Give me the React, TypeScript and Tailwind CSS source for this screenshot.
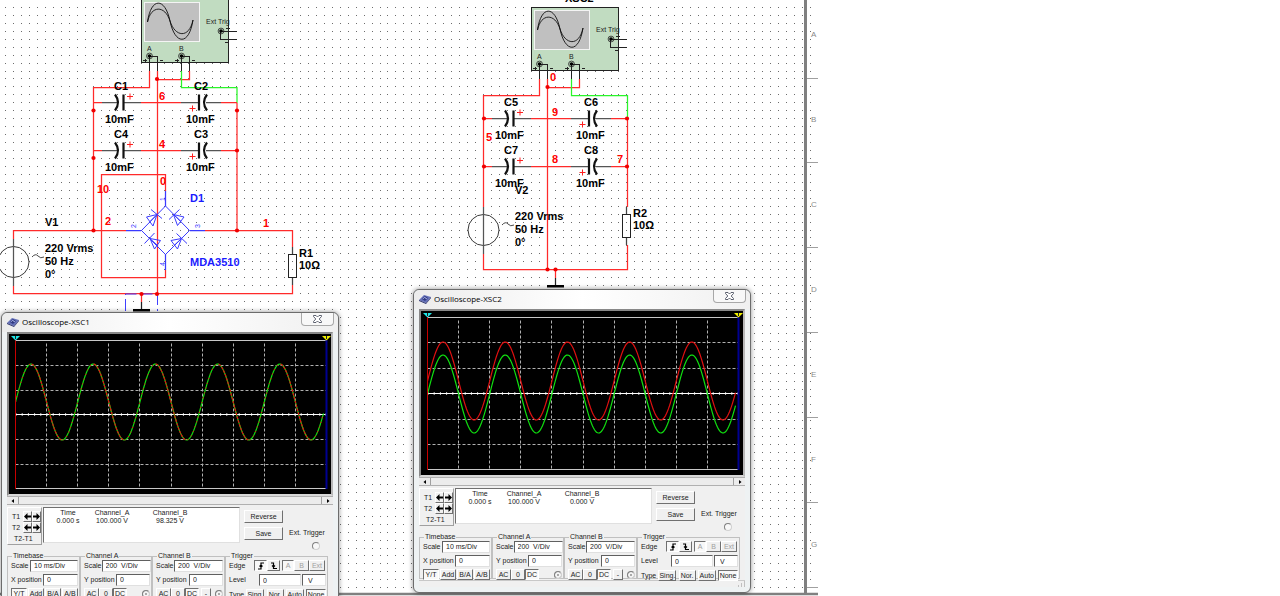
import type { ReactNode } from "react";

type Trace = {
  color: string;
  center: number;
  amp: number;
  dash?: string;
  half?: "rising" | "falling";
};

type ScopeProps = {
  name: string;
  position: string;
  plotHeight: number;
  traces: Trace[];
  channelB: string;
};

const PLOT_LEFT = 6.5;
const PLOT_WIDTH = 311;

const gridDots = () => {
  let d = "";
  for (let i = 0; i < 102; i++) {
    for (let j = 0; j < 74; j++) {
      d += `M${Math.floor(5.67 + i * 7.965)} ${Math.floor(7.4 + j * 7.95) + 0.5}h1`;
    }
  }
  return d;
};

const sinePath = ({ center, amp, half }: Trace) => {
  let d = "";
  let pen = false;
  for (let x = 0; x <= 308; x++) {
    const angle = (x / (PLOT_WIDTH / 5)) * Math.PI * 2;
    const rising = Math.cos(angle) > 0;
    if ((half === "falling" && rising) || (half === "rising" && !rising)) {
      pen = false;
      continue;
    }
    const y = center - amp * Math.sin(angle);
    d += `${pen ? "L" : "M"}${PLOT_LEFT + x} ${y.toFixed(2)}`;
    pen = true;
  }
  return d;
};

const Wire = ({ d, color = "#ff2a2a" }: { d: string; color?: string }) => (
  <path d={d} stroke={color} strokeWidth="1.25" fill="none" />
);

const Label = ({
  x,
  y,
  color = "#000",
  children,
}: {
  x: number;
  y: number;
  color?: string;
  children: ReactNode;
}) => (
  <text x={x} y={y} fill={color} className="text-[11px] font-bold">
    {children}
  </text>
);

const Dots = ({ at }: { at: number[][] }) => (
  <g fill="#f00000">
    {at.map(([x, y]) => (
      <circle key={`${x}-${y}`} cx={x} cy={y} r="2.1" />
    ))}
  </g>
);

const Terminal = ({ x, y }: { x: number; y: number }) => (
  <>
    <circle cx={x} cy={y} r="2.9" fill="none" stroke="#222" strokeWidth="0.8" />
    <circle cx={x} cy={y} r="1.8" fill="#000" />
  </>
);

// XSC instrument symbol
const Instrument = ({ x, y }: { x: number; y: number }) => (
  <g transform={`translate(${x} ${y})`}>
    <rect x="0.5" y="0.5" width="87" height="63" fill="#c1dcc1" stroke="#222" shapeRendering="crispEdges" />
    <rect x="3.5" y="3.5" width="55" height="39" fill="#c0c0c0" stroke="#f4f4f4" shapeRendering="crispEdges" />
    <g fill="none" stroke="#111" strokeWidth="0.9">
      <path d="M6.5 23C10 -2 24 -2 29 22S48 47 52 21" />
      <path d="M6.5 23C10 6 24 6 29 22S48 40 52 21" />
    </g>
    <g fill="none" stroke="#222" shapeRendering="crispEdges">
      <path d="M80 32.5H96M79.5 32V40.5H96M84 43.5H88M85 29.5H89M87.5 28V32" />
      <path d="M8.5 57V72M8 57.5H16.5V72M40.5 57V72M40 57.5H48.5V72" />
      <path d="M2 61.5H6M4.5 60V64M19 61.5H22M34 61.5H38M36.5 60V64M51 61.5H54" />
    </g>
    <Terminal x={80} y={32} />
    <Terminal x={8.5} y={57} />
    <Terminal x={40.5} y={57} />
    <g fill="#222" className="text-[7px]">
      <text x="65" y="25">Ext Trig</text>
      <text x="6" y="52">A</text>
      <text x="38" y="52">B</text>
    </g>
  </g>
);

// Two capacitors in series between the left and right rails
const CapRow = ({ x, y, names }: { x: number; y: number; names: [string, string] }) => (
  <g transform={`translate(${x} ${y})`}>
    <Wire d="M0 .5H9M48 .5H88M128 .5H144" />
    <Wire d="M9 .5H25M31 .5H48M88 .5H105M113 .5H128" color="#555" />
    <g fill="none" stroke="#111" strokeWidth="2.2">
      <path d="M22 -7.5Q28 .5 22 8.5" />
      <path d="M30.5 -7.5V8.5M106 -7.5V8.5" />
      <path d="M114 -7.5Q108 .5 114 8.5" />
    </g>
    <path d="M34 -5.5H40M37 -8.5V-2.5M96.500 6.5H102.500M99.500 3.500V9.500" stroke="#ff2020" />
    <Label x={21} y={-12}>{names[0]}</Label>
    <Label x={101} y={-12}>{names[1]}</Label>
    <Label x={12} y={21}>10mF</Label>
    <Label x={93} y={21}>10mF</Label>
  </g>
);

const Source = ({ x, y }: { x: number; y: number }) => (
  <g transform={`translate(${x} ${y})`}>
    <circle cx=".5" cy="0" r="15.500" fill="none" stroke="#222" strokeWidth="0.9" />
    <Wire d="M.5 -23V24" color="#555" />
    <path d="M19 -5Q22.500 -9 25 -6T31 -5" fill="none" stroke="#333" strokeWidth="0.9" />
    <Label x={32} y={-10}>220 Vrms</Label>
    <Label x={32} y={3}>50 Hz</Label>
    <Label x={32} y={16}>0°</Label>
  </g>
);

const Resistor = ({ x, y, name }: { x: number; y: number; name: string }) => (
  <g transform={`translate(${x} ${y})`}>
    <Wire d="M.5 -7V0M.5 24V31" color="#444" />
    <rect x="-3.5" y=".5" width="8" height="23" fill="none" stroke="#222" shapeRendering="crispEdges" />
    <Label x={7} y={3}>{name}</Label>
    <Label x={7} y={15}>10Ω</Label>
  </g>
);

const Ground = ({ x, y }: { x: number; y: number }) => (
  <g transform={`translate(${x} ${y})`}>
    <Wire d="M.5 0V8" />
    <Wire d="M.5 8V15" color="#222" />
    <rect x="-8" y="15" width="17" height="2.500" fill="#000" />
  </g>
);

const Bridge = () => (
  <g>
    <Wire d="M165.500 191V206M165.500 254V270M126 230.500H141M190 230.500H205" color="#3a3aff" />
    <g fill="none" stroke="#3a3aff" strokeWidth="1">
      <path d="M165.500 206L189.500 230.500L165.500 254.500L141.500 230.500Z" />
      <path d="M157 214.500L146.500 217L153 226ZM151 209.500L162 218.500M157 214.500L150 221.500" />
      <path d="M173.500 214.500L184 217L177.500 225.500ZM179.500 209.500L169 219.500M173.500 214.500L181 221.500" />
      <path d="M150 238.500L160.500 240.500L154.500 249ZM154.500 233L144.500 243.500M150 238.500L157.500 245.500" />
      <path d="M181.500 238.500L171 240.500L177.500 249ZM176.500 233.500L187 243.500M181.500 238.500L174 245.500" />
    </g>
    <g fill="#3a3aff" className="text-[7px]">
      <text transform="translate(165 201) rotate(-90)">1</text>
      <text transform="translate(136 228) rotate(-90)">2</text>
      <text transform="translate(200 228) rotate(-90)">3</text>
      <text transform="translate(165 266) rotate(-90)">4</text>
    </g>
    <Label x={190} y={202} color="#1a1aff">D1</Label>
    <Label x={190} y={266} color="#1a1aff">MDA3510</Label>
  </g>
);

const Schematic = () => (
  <svg
    role="img"
    aria-label="Schematic"
    className="block h-full w-full font-['Liberation_Sans',Arial,sans-serif]"
  >
    <path d={gridDots()} stroke="#6c6c6c" shapeRendering="crispEdges" />

    {/* sheet border and ruler */}
    <path d="M805.500 0V595" stroke="#808080" strokeWidth="3" />
    <path d="M0 594H818" stroke="#808080" strokeWidth="2.500" />
    <path
      d="M807 78.500H818M807 162.500H818M807 247.500H818M807 332.500H818M807 417.500H818M807 502.500H818M807 587.500H818"
      stroke="#a0a0a0"
    />
    <g fill="#8a8a8a" className="text-[8px]">
      {["A", "B", "C", "D", "E", "F", "G"].map((letter, i) => (
        <text key={letter} x="811" y={37 + i * 85}>{letter}</text>
      ))}
    </g>

    {/* left circuit */}
    <Instrument x={141} y={-1} />
    <Wire d="M149.500 71V87.500H93.500V230M157.500 71V293M189.500 71V79.500H157" />
    <Wire d="M181.500 71V87.500H237V103" color="#2af52a" />
    <Wire d="M237 103V230" />
    <CapRow x={93} y={102} names={["C1", "C2"]} />
    <CapRow x={93} y={150} names={["C4", "C3"]} />
    <Wire d="M126 230.500H13.500V239M13.500 286V293.500H292.500V285M292.500 247V230.500H205" />
    <Wire d="M165.500 191V174.500H101.500V277.500H165.500V270" />
    <Bridge />
    <Source x={13} y={262} />
    <Resistor x={292} y={254} name="R1" />
    <Ground x={141} y={294} />
    <path d="M125.500 311V294H157.500V311" fill="none" stroke="#4040ff" strokeDasharray="12 4" />
    <Dots at={[[157, 79], [93.5, 110.5], [237, 110.5], [93.5, 158], [237, 150.5], [93.5, 230.5], [237, 230.5], [141.5, 294], [157, 294]]} />
    <Label x={159} y={100} color="#f00">6</Label>
    <Label x={159} y={148} color="#f00">4</Label>
    <Label x={160} y={185} color="#f00">0</Label>
    <Label x={97} y={193} color="#f00">10</Label>
    <Label x={105} y={225} color="#f00">2</Label>
    <Label x={263} y={227} color="#f00">1</Label>
    <Label x={45} y={226}>V1</Label>

    {/* right circuit */}
    <Label x={565} y={2}>XSC2</Label>
    <Instrument x={531} y={7} />
    <Wire d="M539.500 79V95.500H483.500V207M547.500 79V269M579.500 79V87.500H547" />
    <Wire d="M571.500 79V95.500H627.500V118" color="#2af52a" />
    <Wire d="M627.500 118V207M483.500 254V269.500H627.500V245" />
    <CapRow x={483} y={118} names={["C5", "C6"]} />
    <CapRow x={483} y={166} names={["C7", "C8"]} />
    <Source x={483} y={230} />
    <Resistor x={626} y={214} name="R2" />
    <Ground x={555} y={270} />
    <Dots at={[[547.5, 87], [484, 118.5], [627, 118.5], [484, 166.5], [627, 166.5], [547.5, 269.5], [555.5, 269.5]]} />
    <Label x={550} y={81} color="#f00">0</Label>
    <Label x={552} y={116} color="#f00">9</Label>
    <Label x={486} y={141} color="#f00">5</Label>
    <Label x={552} y={163} color="#f00">8</Label>
    <Label x={617} y={163} color="#f00">7</Label>
    <Label x={515} y={194}>V2</Label>
  </svg>
);

const Plot = ({ height, traces }: { height: number; traces: Trace[] }) => {
  const top = 6.5;
  const bottom = height - 5;
  const step = (bottom - top) / 6;
  const middle = Math.floor(top + step * 3) + 0.5;
  const right = PLOT_LEFT + PLOT_WIDTH;
  return (
    <svg className="block w-full bg-black" height={height} role="img" aria-label="Waveforms">
      <g stroke="#b0b0b0" strokeDasharray="3 2">
        {[1, 2, 3, 4, 5, 6, 7, 8, 9].map((i) => {
          const x = Math.floor(PLOT_LEFT + i * 31.1) + 0.5;
          return <path key={i} d={`M${x} ${top + 3}V${bottom}`} />;
        })}
        {[1, 2, 4, 5].map((i) => {
          const y = Math.floor(top + i * step) + 0.5;
          return <path key={i} d={`M${PLOT_LEFT} ${y}H${right}`} />;
        })}
      </g>
      <path d={`M${PLOT_LEFT} ${top}H${right}M${PLOT_LEFT} ${bottom - 0.5}H${right}`} stroke="#c8c8c8" />
      <path d={`M${PLOT_LEFT} ${middle}H${right}`} stroke="#fff" />
      <path d={`M${PLOT_LEFT} ${middle}H${right}`} stroke="#fff" strokeWidth="2.500" strokeDasharray="1 5.200" />
      {traces.map((trace, i) => (
        <path
          key={i}
          d={sinePath(trace)}
          stroke={trace.color}
          strokeDasharray={trace.dash}
          strokeWidth="1.200"
          fill="none"
        />
      ))}
      <path d={`M${PLOT_LEFT} 6V${bottom}`} stroke="#c80000" />
      <path d={`M${right} 6V${bottom}`} stroke="#000090" strokeWidth="2" />
      <path d="M2 2H11L6.500 6.500Z" fill="#20e8e8" />
      <path d="M313 2H322L317.500 6.500Z" fill="#f0f000" />
      <path d="M6.500 2V5M317.500 2V5" stroke="#222" />
    </svg>
  );
};

const RAISED = "border border-t-white border-l-white border-r-[#707070] border-b-[#707070] bg-[#f0f0f0]";
const SUNKEN = "border border-t-[#707070] border-l-[#707070] border-r-white border-b-white bg-[#f8f8f8]";

const Push = ({
  children,
  className = "h-[11px] w-4",
  on = false,
  disabled = false,
  label,
}: {
  children: ReactNode;
  className?: string;
  on?: boolean;
  disabled?: boolean;
  label?: string;
}) => (
  <button
    type="button"
    disabled={disabled}
    aria-label={label}
    className={`flex shrink-0 items-center justify-center whitespace-nowrap disabled:text-[#a0a0a0] ${on ? SUNKEN : RAISED} ${className}`}
  >
    {children}
  </button>
);

const Field = ({
  id,
  label,
  value,
  width,
}: {
  id: string;
  label: string;
  value: string;
  width: string;
}) => (
  <div className="flex h-[11px] items-center justify-between">
    <label htmlFor={id} className="whitespace-nowrap">{label}</label>
    <input
      id={id}
      defaultValue={value}
      className={`h-3 shrink-0 border border-t-[#606060] border-l-[#606060] border-r-[#e0e0e0] border-b-[#e0e0e0] bg-white px-[3px] ${width}`}
    />
  </div>
);

const Group = ({
  title,
  className,
  children,
}: {
  title: string;
  className: string;
  children: ReactNode;
}) => (
  <fieldset className={`h-[46px] min-w-0 border border-[#c0c0c0] pr-px pl-[3px] ${className}`}>
    <legend className="ml-px h-2 px-px leading-[8px]">{title}</legend>
    <div className="flex flex-col gap-[3px]">{children}</div>
  </fieldset>
);

const Radio = ({ label, on = false }: { label: string; on?: boolean }) => (
  <input
    type="radio"
    aria-label={label}
    defaultChecked={on}
    className="size-2 shrink-0 appearance-none rounded-full border border-[#808080] border-r-[#d0d0d0] border-b-[#d0d0d0] bg-[#f8f8f8] checked:bg-[#909090] checked:shadow-[inset_0_0_0_2px_#f4f4f4]"
  />
);

const Arrow = ({ left = false, label }: { left?: boolean; label: string }) => (
  <Push className="h-[11px] w-[9px]" label={label}>
    <svg viewBox="0 0 7 7" className="size-[7px] shrink-0">
      <path
        d={left ? "M0 3.500L3.500 0V2.500H7V4.500H3.500V7Z" : "M7 3.500L3.500 0V2.500H0V4.500H3.500V7Z"}
        fill="#000"
      />
    </svg>
  </Push>
);

const EdgeIcon = ({ rising = false }: { rising?: boolean }) => (
  <svg viewBox="0 0 8 8" className="size-2">
    <path
      d={rising ? "M1 7H4V1H7M2.500 4.500L4 3L5.500 4.500" : "M1 1H3.500V6.500H7M2 3.500L3.500 5L5 3.500"}
      fill="none"
      stroke="#000"
      strokeWidth="1.200"
    />
  </svg>
);

const Channel = ({ id, name }: { id: string; name: string }) => (
  <Group title={`Channel ${name}`} className={name === "A" ? "w-[72px]" : "w-[73px]"}>
    <Field id={`${id}-${name}-scale`} label="Scale" value="200  V/Div" width="w-[49px]" />
    <Field id={`${id}-${name}-pos`} label="Y position" value="0" width="w-[34px]" />
    <div className="flex items-center">
      <Push className="h-[11px] w-[15px]">AC</Push>
      <Push className="h-[11px] w-[14px]">0</Push>
      <Push className="h-[11px] w-[14px]" on>DC</Push>
      {name === "B" && <Push className="ml-[2px] h-[11px] w-[10px]">-</Push>}
      <span className="ml-auto flex">
        <Radio label={`Channel ${name} input`} on />
      </span>
    </div>
  </Group>
);

const Oscilloscope = ({ name, position, plotHeight, traces, channelB }: ScopeProps) => (
  <section
    aria-label={name}
    className={`absolute w-[338px] rounded-md border border-[#6c6c6c] bg-[#eef2f3] px-[5px] pb-[5px] text-[7px] leading-[8px] text-[#222] shadow-[0_0_5px_#00000070] ${position}`}
  >
    <header className="-mx-[5px] flex h-[19px] items-start rounded-t-md bg-linear-to-r from-[#ececec] via-white to-[#f0f0f0] pr-1 pl-[5px]">
      <svg viewBox="0 0 12 10" className="mt-1 h-[10px] w-3">
        <path d="M0 6L5 1L12 3L7 9Z" fill="#6470b8" />
        <path d="M0 6L7 9L12 3V4L7 10L0 7Z" fill="#29306c" />
        <path d="M3 5L6 2L9 4L6 7Z" fill="#303a80" />
        <path d="M4 5L6 3L7 5L8 4" fill="none" stroke="#c8d0ff" strokeWidth="0.600" />
      </svg>
      <h2 className="mt-[2px] ml-[3px] font-['Open_Sans',sans-serif] text-[8px] leading-[14px] text-black">
        {name}
      </h2>
      <button
        type="button"
        aria-label="Close"
        className="ml-auto flex h-[13px] w-[33px] items-center justify-center rounded-b-sm border border-t-0 border-[#a8a8a8] bg-[#f8f8f8]"
      >
        <svg viewBox="0 0 9 8" className="h-2 w-[9px]">
          <path
            d="M.5 .5H3L4.500 2L6 .5H8.500V1.500L6.200 4L8.500 6.500V7.500H6L4.500 6L3 7.500H.5V6.500L2.800 4L.5 1.500Z"
            fill="#fff"
            stroke="#4c5060"
            strokeWidth="0.900"
          />
        </svg>
      </button>
    </header>

    <div className="bg-[#f0f0f0]">
      <div className="border-2 border-t-[#888] border-r-[#b8b8b8] border-b-[#d8d8d8] border-l-[#888]">
        <Plot height={plotHeight} traces={traces} />
      </div>
      <div className="flex h-[9px] border-y border-[#b0b0b0] bg-[#ececec]">
        <button type="button" aria-label="Scroll left" className="flex w-3 items-center justify-center border-r border-[#a0a0a0]">
          <svg viewBox="0 0 4 4" className="size-1"><path d="M3 0V4L.5 2Z" /></svg>
        </button>
        <button type="button" aria-label="Scroll right" className="ml-auto flex w-3 items-center justify-center border-l border-[#a0a0a0]">
          <svg viewBox="0 0 4 4" className="size-1"><path d="M1 0V4L3.500 2Z" /></svg>
        </button>
      </div>

      <div className="mt-[2px] flex h-[38px]">
        <div className="flex w-[35px] flex-col border border-t-white border-l-white border-r-[#a0a0a0] border-b-[#a0a0a0] pt-[3px] pl-1">
          <div className="flex items-center">
            <span className="w-3">T1</span>
            <Arrow left label="T1 left" />
            <Arrow label="T1 right" />
          </div>
          <div className="flex items-center">
            <span className="w-3">T2</span>
            <Arrow left label="T2 left" />
            <Arrow label="T2 right" />
          </div>
          <span className="mt-[2px] ml-[2px]">T2-T1</span>
        </div>
        <div className="ml-px h-9 w-[197px] border border-t-[#707070] border-l-[#707070] border-r-[#e0e0e0] border-b-[#e0e0e0] bg-white pt-px">
          <table className="table-fixed text-center whitespace-nowrap">
            <thead>
              <tr>
                <th className="w-12 p-0 font-normal">Time</th>
                <th className="w-10 p-0 font-normal">Channel_A</th>
                <th className="w-[76px] p-0 font-normal">Channel_B</th>
              </tr>
            </thead>
            <tbody>
              <tr>
                <td className="p-0">0.000 s</td>
                <td className="p-0">100.000 V</td>
                <td className="p-0">{channelB}</td>
              </tr>
            </tbody>
          </table>
        </div>
        <div className="ml-1 flex w-[39px] flex-col gap-1 pt-[3px]">
          <Push className="h-[13px] w-full">Reverse</Push>
          <Push className="h-[13px] w-full">Save</Push>
        </div>
        <label className="ml-[6px] flex flex-col items-end gap-[5px] pt-[22px] whitespace-nowrap">
          Ext. Trigger
          <span className="mr-[5px] flex">
            <Radio label="Ext. Trigger" />
          </span>
        </label>
      </div>

      <div className="mt-[7px] flex">
        <Group title="Timebase" className="w-[73px]">
          <Field id={`${name}-scale`} label="Scale" value="10 ms/Div" width="w-12" />
          <Field id={`${name}-x`} label="X position" value="0" width="w-[35px]" />
          <div className="flex gap-px">
            <Push on>Y/T</Push>
            <Push>Add</Push>
            <Push>B/A</Push>
            <Push>A/B</Push>
          </div>
        </Group>
        <Channel id={name} name="A" />
        <Channel id={name} name="B" />
        <Group title="Trigger" className="w-[103px]">
          <div className="flex items-center">
            <span className="w-[25px]">Edge</span>
            <Push className="h-[11px] w-[13px]" on label="Rising edge"><EdgeIcon rising /></Push>
            <Push className="mr-[2px] h-[11px] w-[13px]" label="Falling edge"><EdgeIcon /></Push>
            <Push className="h-[11px] w-3" on disabled>A</Push>
            <Push className="h-[11px] w-[15px]" disabled>B</Push>
            <Push disabled>Ext</Push>
          </div>
          <div className="flex items-center gap-px">
            <div className="grow">
              <Field id={`${name}-level`} label="Level" value="0" width="w-[42px]" />
            </div>
            <input
              aria-label="Level unit"
              defaultValue="V"
              className="h-3 w-6 shrink-0 border border-t-[#606060] border-l-[#606060] border-r-[#e0e0e0] border-b-[#e0e0e0] bg-white px-[5px]"
            />
          </div>
          <div className="flex items-center justify-between">
            <span>Type</span>
            <Push className="h-[11px] w-[18px]">Sing.</Push>
            <Push className="h-[11px] w-[17px]">Nor.</Push>
            <Push className="h-[11px] w-[18px]">Auto</Push>
            <Push className="h-[11px] w-5" on>None</Push>
          </div>
        </Group>
      </div>
      <div className="mt-px flex h-[7px] justify-end border-t border-[#c8c8c8]">
        <svg viewBox="0 0 7 6" className="h-[6px] w-[7px]">
          <path d="M0 5H1M3 5H4M6 5H7M3 3H4M6 3H7M6 1H7" stroke="#909090" />
        </svg>
      </div>
    </div>
  </section>
);

export default () => (
  <main className="relative h-screen overflow-hidden bg-white font-['Liberation_Sans',Arial,sans-serif]">
    <Schematic />
    <Oscilloscope
      name="Oscilloscope-XSC1"
      position="top-[312px] left-px"
      plotHeight={160}
      channelB="98.325 V"
      traces={[
        { color: "#10e010", center: 68, amp: 38 },
        { color: "#e01010", center: 68, amp: 38, half: "falling", dash: "3 1" },
        { color: "#e01010", center: 68, amp: 38, half: "rising", dash: "1 4" },
      ]}
    />
    <Oscilloscope
      name="Oscilloscope-XSC2"
      position="top-[289px] left-[413px]"
      plotHeight={164}
      channelB="0.000 V"
      traces={[
        { color: "#e01010", center: 70, amp: 39 },
        { color: "#10e010", center: 83, amp: 39 },
      ]}
    />
  </main>
);
